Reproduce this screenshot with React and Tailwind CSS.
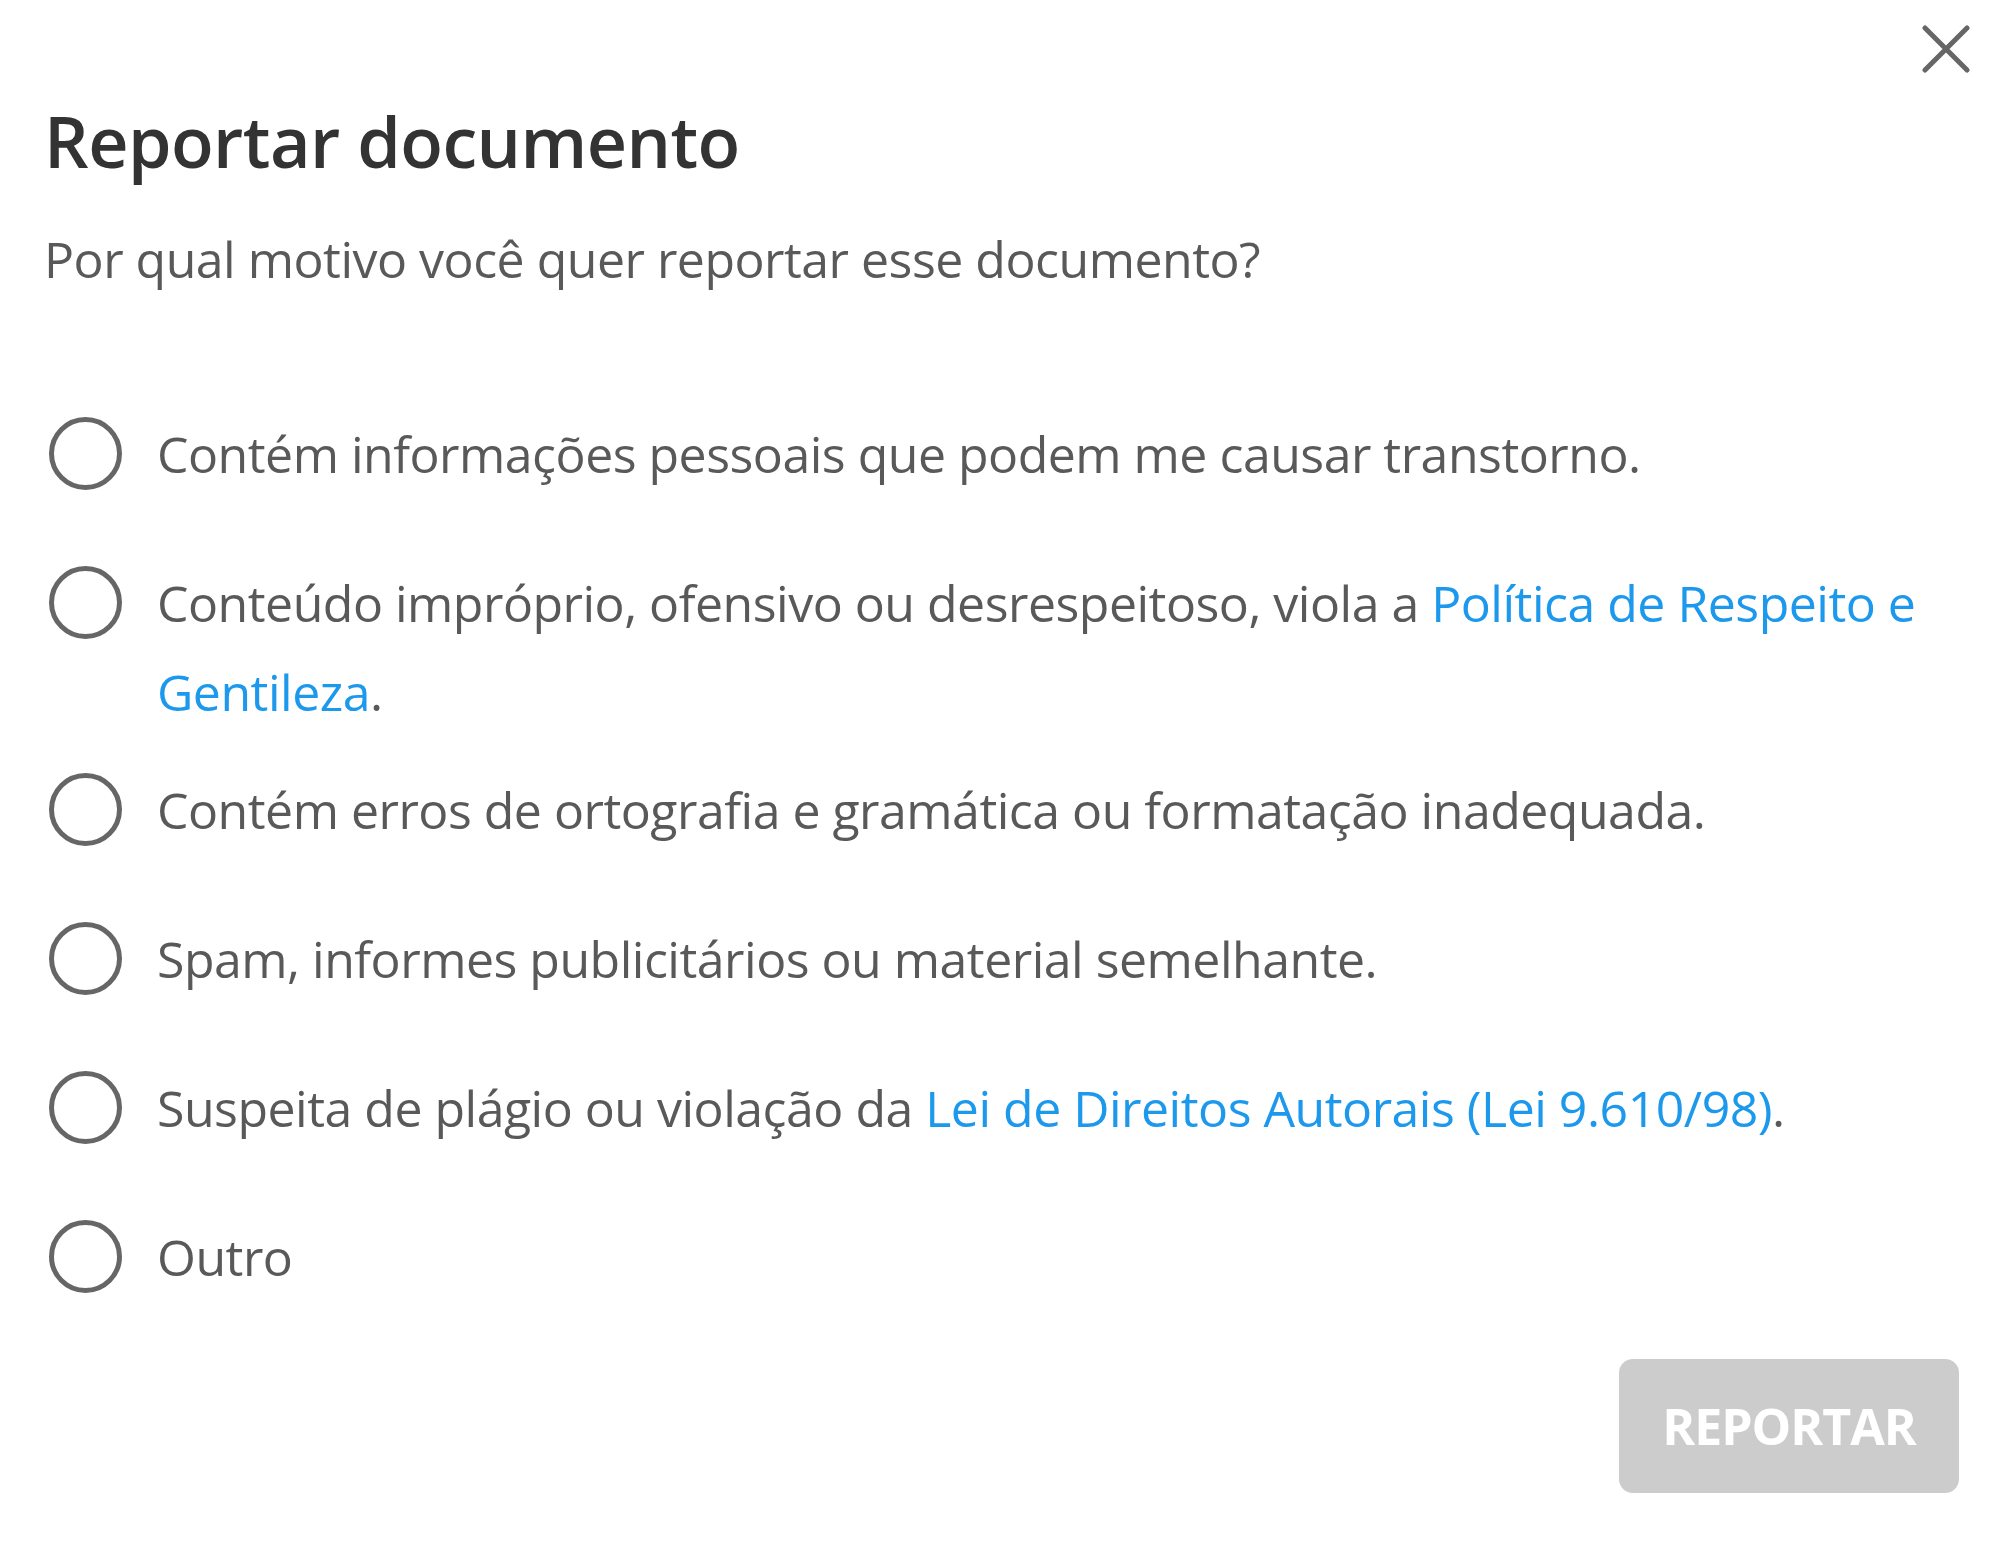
import { useState } from 'react';

const OPTIONS = [
  { id: 'pessoais', text: 'Contém informações pessoais que podem me causar transtorno.' },
  {
    id: 'improprio',
    text: 'Conteúdo impróprio, ofensivo ou desrespeitoso, viola a ',
    link: 'Política de Respeito e Gentileza',
    double: true,
  },
  { id: 'erros', text: 'Contém erros de ortografia e gramática ou formatação inadequada.' },
  { id: 'spam', text: 'Spam, informes publicitários ou material semelhante.' },
  {
    id: 'plagio',
    text: 'Suspeita de plágio ou violação da ',
    link: 'Lei de Direitos Autorais (Lei 9.610/98)',
  },
  { id: 'outro', text: 'Outro' },
];

function Radio({ checked }) {
  return (
    <div className="h-[120px] w-[113px] flex-shrink-0 flex items-center pl-[5px]">
      <div className="w-[73px] h-[73px] rounded-full border-[5px] border-[#666666] flex items-center justify-center">
        {checked && <div className="w-[37px] h-[37px] rounded-full bg-[#1c98ed]" />}
      </div>
    </div>
  );
}

export default function App() {
  const [selected, setSelected] = useState(null);

  return (
    <div
      className="relative min-h-screen bg-white"
      style={{ fontFamily: '"Open Sans", "Noto Sans", sans-serif' }}
    >
      {/* close */}
      <button className="absolute top-[25px] right-[30px] w-[48px] h-[48px] text-[#666666]">
        <svg width="48" height="48" viewBox="0 0 48 48" fill="none" stroke="currentColor" strokeWidth="5" strokeLinecap="round">
          <path d="M3 3L45 45M45 3L3 45" />
        </svg>
      </button>

      <div className="pl-[44px] pr-[41px] pt-[98px]">
        <h2 className="text-[70px] leading-[86px] font-semibold text-[#333333] tracking-[-0.008em]">
          Reportar documento
        </h2>
        <p className="mt-[45px] text-[50px] leading-[60px] text-[#595959] tracking-[-0.01em]">
          Por qual motivo você quer reportar esse documento?
        </p>

        {/* options */}
        <div className="mt-[104px] flex flex-col">
          {OPTIONS.map(opt => (
            <label
              key={opt.id}
              onClick={() => setSelected(opt.id)}
              className={`flex items-start cursor-pointer ${opt.double ? 'h-[207px]' : 'h-[149px]'}`}
            >
              <Radio checked={selected === opt.id} />
              <span className="pt-[17px] text-[50px] leading-[89px] text-[#595959] tracking-[-0.01em]">
                {opt.text}
                {opt.link && <a className="text-[#1c98ed]">{opt.link}</a>}
                {opt.link && '.'}
              </span>
            </label>
          ))}
        </div>

        <div className="mt-[14px] flex justify-end">
          <button
            disabled={!selected}
            className="w-[340px] h-[134px] rounded-[14px] bg-[#cccccc] text-white text-[50px] font-bold tracking-[-0.02em]"
          >
            REPORTAR
          </button>
        </div>
      </div>
    </div>
  );
}
